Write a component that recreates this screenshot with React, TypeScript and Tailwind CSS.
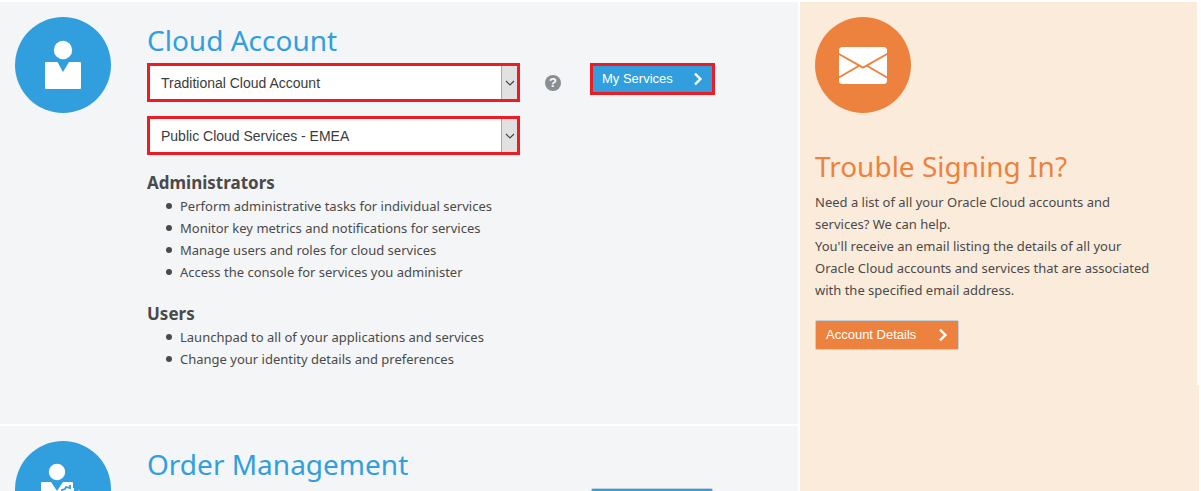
import type { ReactNode } from "react";

const headingClass = "text-[28px] leading-[46px] font-normal";
const buttonClass =
  "flex h-[30px] items-center justify-between rounded-[2px] border border-[#c3d0da] px-[10px] text-left text-[13px] text-white";

function Chevron() {
  return (
    <svg viewBox="0 0 10 14" className="h-[14px] w-[10px]" fill="none" stroke="currentColor" strokeWidth="2.4" aria-hidden="true">
      <path d="M2 1.6 7.4 7 2 12.4" />
    </svg>
  );
}

function Badge({ color, children }: { color: string; children: ReactNode }) {
  return (
    <svg viewBox="0 0 96 96" className="size-24 shrink-0" aria-hidden="true">
      <circle cx="48" cy="48" r="48" fill={color} />
      {children}
    </svg>
  );
}

function AccountSelect({ label, options }: { label: string; options: string[] }) {
  return (
    <div className="relative h-[39px] border-[3px] border-[#ed1c24] bg-white">
      <select
        aria-label={label}
        className="h-full w-full appearance-none bg-transparent pt-[2px] pr-6 pl-[11px] text-[14px] text-[#3c3c3c] outline-none"
      >
        {options.map((o) => (
          <option key={o}>{o}</option>
        ))}
      </select>
      <span className="pointer-events-none absolute inset-y-0 right-0 flex w-4 items-center justify-center border-l border-[#a9a9a9] bg-[#e1e1e1]">
        <svg viewBox="0 0 10 6" className="h-[6px] w-[10px]" fill="none" stroke="#444" strokeWidth="1.2" aria-hidden="true">
          <path d="M1 1l4 4 4-4" />
        </svg>
      </span>
    </div>
  );
}

function RoleList({ title, items }: { title: string; items: string[] }) {
  return (
    <section>
      <h3 className="text-[17px] leading-[24px] font-bold">{title}</h3>
      <ul className="text-[13px] leading-[22px]">
        {items.map((item) => (
          <li key={item} className="flex items-center pl-[19px]">
            <span className="mr-2 size-[6px] shrink-0 rounded-full bg-[#4a4a4a]" />
            {item}
          </li>
        ))}
      </ul>
    </section>
  );
}

export default function App() {
  return (
    <main className="grid h-screen grid-cols-[2fr_1fr] gap-[2px] overflow-hidden bg-white pt-[2px] pr-[2px] font-['Noto_Sans',sans-serif] text-[#4a4a4a]">
      <div className="flex min-w-0 flex-col gap-[2px]">
        <section className="flex shrink-0 gap-9 bg-[#f3f5f7] px-[15px] pt-[15px] pb-[54px]">
          <Badge color="#319fdd">
            <circle cx="48" cy="33" r="9.2" fill="#fff" />
            <path d="M31 45h11.5L48 55l6-10h11q1 0 1 1v25q0 1-1 1H31q-1 0-1-1V46q0-1 1-1z" fill="#fff" />
          </Badge>
          <div className="min-w-0 flex-1">
            <h2 className={`${headingClass} text-[#319fdd]`}>Cloud Account</h2>
            <div className="flex items-start font-['Liberation_Sans',sans-serif]">
              <div className="flex w-[373px] flex-col gap-[14px]">
                <AccountSelect label="Account type" options={["Traditional Cloud Account"]} />
                <AccountSelect label="Data region" options={["Public Cloud Services - EMEA"]} />
              </div>
              <button aria-label="Help" className="mt-3 ml-[25px] flex size-4 items-center justify-center rounded-full bg-[#8b8e90] text-[13px] leading-4 font-bold text-white">
                ?
              </button>
              <button className="ml-[29px] flex h-8 w-[125px] items-center justify-between border-[3px] border-[#ed1c24] bg-[#319fdd] px-[9px] text-[13px] text-white">
                My Services
                <Chevron />
              </button>
            </div>
            <div className="mt-4 flex flex-col gap-[19px]">
              <RoleList
                title="Administrators"
                items={[
                  "Perform administrative tasks for individual services",
                  "Monitor key metrics and notifications for services",
                  "Manage users and roles for cloud services",
                  "Access the console for services you administer",
                ]}
              />
              <RoleList
                title="Users"
                items={["Launchpad to all of your applications and services", "Change your identity details and preferences"]}
              />
            </div>
          </div>
        </section>
        <section className="flex shrink-0 gap-9 bg-[#f3f5f7] px-[15px] py-[15px]">
          <Badge color="#319fdd">
            <circle cx="42" cy="31" r="8.2" fill="#fff" />
            <path d="M27 41h9l6 9 6-9h9q1 0 1 1v24H27q-1 0-1-1V42q0-1 1-1z" fill="#fff" />
            <path d="M47 52v-3l3-1 1-2 4 1v-3M60 50v-3" fill="none" stroke="#319fdd" strokeWidth="1.8" />
            <path d="M56 52v-5h3v3l3 1 2-2 2 3" fill="#fff" />
          </Badge>
          <div className="min-w-0 flex-1">
            <h2 className={`${headingClass} text-[#319fdd]`}>Order Management</h2>
            <div className="pt-px pl-[444px]">
              <button aria-label="Order Management" className={`${buttonClass} w-[122px] bg-[#319fdd]`} />
            </div>
          </div>
        </section>
      </div>
      <aside className="min-w-0 bg-[#fbebdb]">
        <div className="min-h-[383px] border-r-2 border-white px-[15px] pt-[15px]">
          <Badge color="#ed823e">
            <rect x="24" y="30" width="48" height="37" rx="3.5" fill="#fff" />
            <path d="M23 36.5 48 50.5 73 36.5M23 61 44.5 48.5M73 61 51.5 48.5" fill="none" stroke="#ed823e" strokeWidth="2" />
          </Badge>
          <h2 className={`${headingClass} mt-[30px] text-[#ed823e]`}>Trouble Signing In?</h2>
          <p className="mt-[2px] max-w-[345px] text-[13px] leading-[22px]">
            Need a list of all your Oracle Cloud accounts and services? We can help.
            <br />
            You'll receive an email listing the details of all your Oracle Cloud accounts and services that are associated with
            the specified email address.
          </p>
          <button className={`${buttonClass} mt-[19px] w-[144px] bg-[#ed823e] font-['Liberation_Sans',sans-serif]`}>
            Account Details
            <Chevron />
          </button>
        </div>
      </aside>
    </main>
  );
}
